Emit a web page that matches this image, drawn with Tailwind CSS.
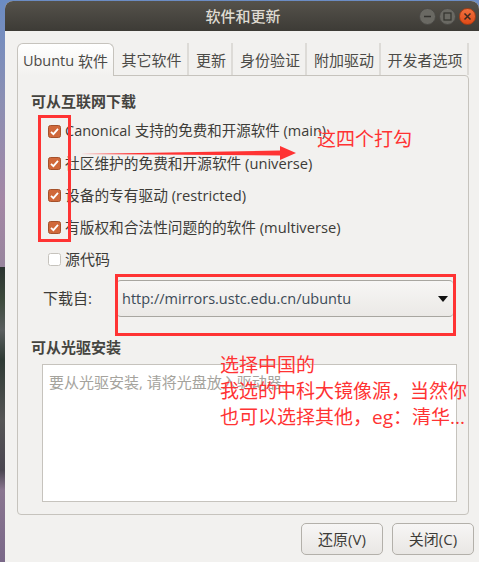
<!DOCTYPE html>
<html lang="zh-CN">
<head>
  <meta charset="UTF-8" />
  <title>软件和更新</title>
  <script src="https://cdn.jsdelivr.net/npm/@tailwindcss/browser@4"></script>
</head>
<body class="relative w-[479px] h-[562px] overflow-hidden bg-[linear-gradient(to_bottom,#6b8cc4_0,#8b8fb3_100px,#a487a5_200px,#98859d_267px,#2b332f_267px,#3d4a3c_300px,#5a5e5e_330px,#2e3a34_360px,#555555_420px,#4a4650_470px,#8a7690_490px,#7a6888_562px)] text-[15px] text-[#3d3c38] font-['Open_Sans','Noto_Sans_CJK_SC',sans-serif]">

  <!-- window -->
  <div class="ml-[5px] mt-px h-[561px] flex flex-col bg-[#f2f1ef] rounded-t-lg overflow-hidden">
    <div class="h-[30px] shrink-0 flex items-center justify-center relative bg-gradient-to-b from-[#55524b] to-[#3d3b36]">
      <span class="text-[#dfdbd2] font-medium pl-[2px]">软件和更新</span>
      <div class="absolute right-[3px] top-[7px] flex gap-[3px]">
        <div class="w-[17px] h-[17px] rounded-full bg-[#6a6963] border border-[#4a4945] flex items-center justify-center">
          <svg width="9" height="9" viewBox="0 0 9 9"><path d="M1 4.5h7" stroke="#33322e" stroke-width="1.3"/></svg>
        </div>
        <div class="w-[17px] h-[17px] rounded-full bg-[#6a6963] border border-[#4a4945] flex items-center justify-center">
          <svg width="9" height="9" viewBox="0 0 9 9"><rect x="1" y="1" width="7" height="7" fill="none" stroke="#33322e" stroke-width="1.2"/></svg>
        </div>
        <div class="w-[17px] h-[17px] rounded-full bg-gradient-to-b from-[#f0703d] to-[#df4a16] border border-[#a83c14] flex items-center justify-center">
          <svg width="9" height="9" viewBox="0 0 9 9"><path d="M1.500 1.500l6 6M7.500 1.500l-6 6" stroke="#3c2a20" stroke-width="1.5"/></svg>
        </div>
      </div>
    </div>

    <div class="flex-1 flex flex-col pl-3 pr-[5px] pt-3">
      <!-- tabs -->
      <div class="flex h-[33px] shrink-0 pr-[5px] text-[#4c4b47]">
        <div class="w-[97px] h-[33px] pt-[2px] flex items-center justify-center bg-gradient-to-b from-white to-[#f2f1ef] border border-b-0 border-[#c6c3bd] rounded-t-md relative z-10"><span class="text-[14.5px]">Ubuntu</span>&nbsp;软件</div>
        <div class="w-[75px] h-[32px] pl-[2px] pt-[2px] flex items-center justify-center border-r-2 border-[#dddbd7]">其它软件</div>
        <div class="w-[44px] h-[32px] pl-[2px] pt-[2px] flex items-center justify-center border-r-2 border-[#dddbd7]">更新</div>
        <div class="w-[74px] h-[32px] pl-[2px] pt-[2px] flex items-center justify-center border-r-2 border-[#dddbd7]">身份验证</div>
        <div class="w-[74px] h-[32px] pl-[2px] pt-[2px] flex items-center justify-center border-r-2 border-[#dddbd7]">附加驱动</div>
        <div class="w-[88px] h-[32px] pl-[2px] pt-[2px] flex items-center justify-center border-r-2 border-[#dddbd7]">开发者选项</div>
      </div>

      <!-- panel -->
      <div class="w-[452px] h-[440px] shrink-0 border border-[#c6c3bd] rounded-b-sm rounded-tr-sm flex flex-col pl-[13px] pt-[15px] relative -mt-px">
        <h2 class="font-bold leading-5 text-[#45443f]">可从互联网下载</h2>
        <div class="mt-[4px] ml-[17px] flex flex-col">
          <label class="h-8 flex items-center gap-[4px]">
            <svg width="13" height="13" viewBox="0 0 13 13"><rect x=".5" y=".5" width="12" height="12" rx="2" fill="#d0683a" stroke="#a5512b"/><path d="M3 6.800l2.400 2.400L10 3.800" fill="none" stroke="#fff" stroke-width="1.8"/></svg>
            <span class="text-[14.5px]">Canonical 支持的免费和开源软件 (main)</span>
          </label>
          <label class="h-8 flex items-center gap-[4px]">
            <svg width="13" height="13" viewBox="0 0 13 13"><rect x=".5" y=".5" width="12" height="12" rx="2" fill="#d0683a" stroke="#a5512b"/><path d="M3 6.800l2.400 2.400L10 3.800" fill="none" stroke="#fff" stroke-width="1.8"/></svg>
            <span class="text-[14.7px]">社区维护的免费和开源软件 (universe)</span>
          </label>
          <label class="h-8 flex items-center gap-[4px]">
            <svg width="13" height="13" viewBox="0 0 13 13"><rect x=".5" y=".5" width="12" height="12" rx="2" fill="#d0683a" stroke="#a5512b"/><path d="M3 6.800l2.400 2.400L10 3.800" fill="none" stroke="#fff" stroke-width="1.8"/></svg>
            <span class="text-[14.7px]">设备的专有驱动 (restricted)</span>
          </label>
          <label class="h-8 flex items-center gap-[4px]">
            <svg width="13" height="13" viewBox="0 0 13 13"><rect x=".5" y=".5" width="12" height="12" rx="2" fill="#d0683a" stroke="#a5512b"/><path d="M3 6.800l2.400 2.400L10 3.800" fill="none" stroke="#fff" stroke-width="1.8"/></svg>
            <span class="text-[14.7px]">有版权和合法性问题的的软件 (multiverse)</span>
          </label>
          <label class="h-8 flex items-center gap-[4px]">
            <svg width="13" height="13" viewBox="0 0 13 13"><rect x=".5" y=".5" width="12" height="12" rx="2" fill="#fff" stroke="#c6c3bd"/></svg>
            <span>源代码</span>
          </label>
        </div>

        <div class="mt-[5px] ml-3 flex items-center h-[37px]">
          <span class="w-[74px]">下载自:</span>
          <div class="w-[336px] h-[37px] flex items-center justify-between pl-[5px] pr-[5px] rounded-[4px] border-y border-[#a8a6a0] bg-gradient-to-b from-[#f7f6f5] to-[#ebe9e6]">
            <span class="text-[14.5px] text-[#3c4a57]">http://mirrors.ustc.edu.cn/ubuntu</span>
            <svg width="10" height="6" viewBox="0 0 10 6"><path d="M0 0h10L5 6z" fill="#111"/></svg>
          </div>
        </div>

        <h2 class="mt-[20px] font-bold leading-5 text-[#45443f]">可从光驱安装</h2>
        <div class="mt-[7px] ml-[11px] w-[415px] h-[138px] bg-white border border-[#c6c3bd] pl-[6px] pt-[6px] text-[#a5a39d]">要从光驱安装, 请将光盘放入驱动器。</div>
      </div>

      <!-- buttons -->
      <div class="mt-2 flex justify-end gap-[9px]">
        <button class="w-[82px] h-8 rounded-[5px] border border-[#b3b0aa] bg-gradient-to-b from-[#f7f6f5] to-[#e9e7e4]">还原(V)</button>
        <button class="w-[82px] h-8 rounded-[5px] border border-[#b3b0aa] bg-gradient-to-b from-[#f7f6f5] to-[#e9e7e4]">关闭(C)</button>
      </div>
    </div>
  </div>

  <!-- red annotations drawn on top of the screenshot -->
  <div class="absolute left-[38px] top-[115px] w-[33px] h-[127px] border-[3px] border-[#ff3333]"></div>
  <div class="absolute left-[115px] top-[274px] w-[341px] h-[62px] border-[3px] border-[#ff3333]"></div>
  <svg class="absolute left-[78px] top-[144px]" width="222" height="18" viewBox="0 0 222 18"><path d="M2 10L202 6.500V2l16 7-16 7v-4.500z" fill="#ff3333"/></svg>
  <div class="absolute left-[317px] top-[126px] text-[19px] leading-[26px] text-[#ff3333]">这四个打勾</div>
  <div class="absolute left-[220px] top-[352px] w-[252px] text-[19px] leading-[26px] text-[#ff3333]">
    <p>选择中国的</p>
    <p>我选的中科大镜像源，当然你</p>
    <p>也可以选择其他，eg：清华...</p>
  </div>
</body>
</html>
